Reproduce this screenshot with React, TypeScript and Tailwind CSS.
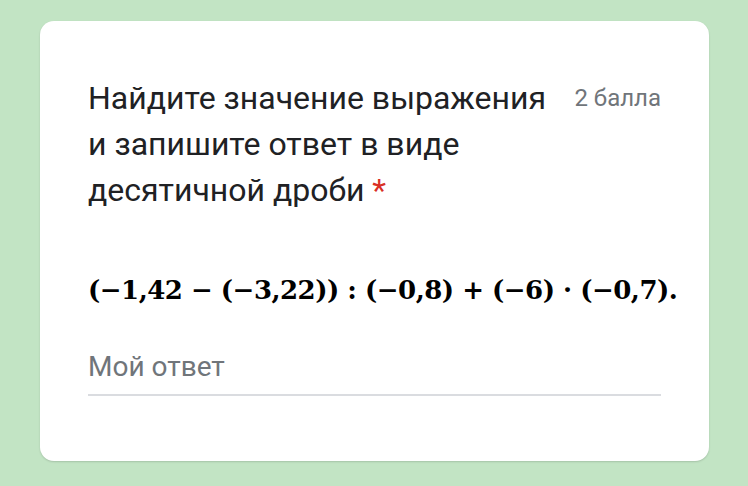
export default function App() {
  return (
    <div className="w-[748px] h-[486px] bg-[#c2e4c4] pt-[21px] px-[40px] font-['Roboto',sans-serif]">
      <div className="w-[669px] h-[440px] bg-white rounded-[14px] shadow-[0_1px_2px_rgba(0,0,0,0.15)] px-[48px] pt-[54px]">
        <div className="flex items-start justify-between">
          <div className="text-[32px] leading-[46px] text-[#202124]">
            Найдите значение выражения
            <br />
            и запишите ответ в виде
            <br />
            десятичной дроби <span className="text-[#d93025]">*</span>
          </div>
          <div className="text-[24px] leading-[46px] text-[#70757a]">2 балла</div>
        </div>
        <div className="mt-[57px] font-['DejaVu_Serif',serif] font-bold text-[26px] leading-[40px] text-black whitespace-nowrap tracking-[-0.5px]">
          (−1,42 − (−3,22)) : (−0,8) + (−6) · (−0,7).
        </div>
        <div className="mt-[41px] w-[573px]">
          <div className="text-[28px] leading-[32px] text-[#70757a]">Мой ответ</div>
          <div className="mt-[11px] h-[2px] bg-[#dadce0]" />
        </div>
      </div>
    </div>
  );
}
